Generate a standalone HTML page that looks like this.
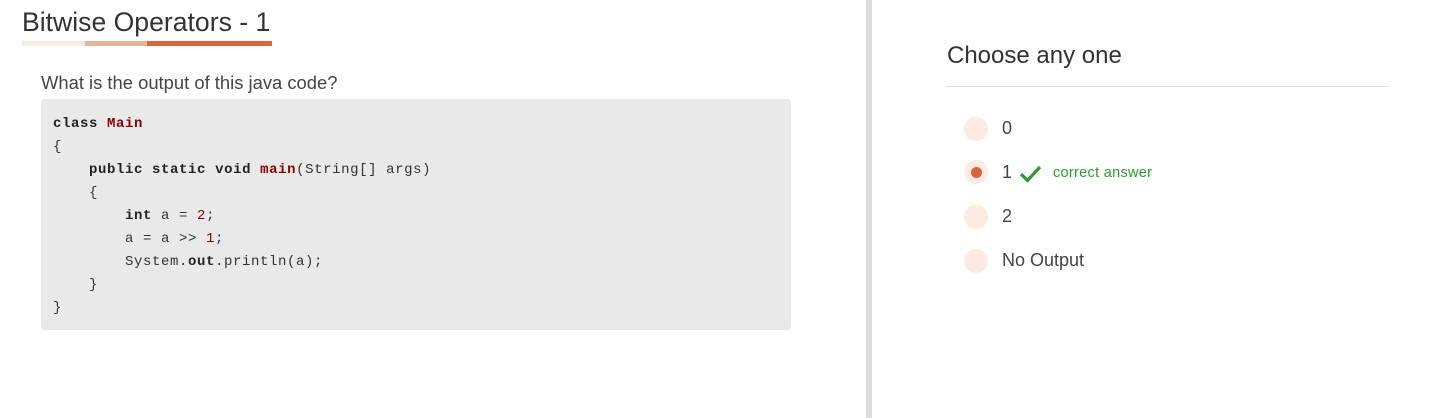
<!DOCTYPE html>
<html><head><meta charset="utf-8"><style>
body{margin:0;width:1432px;height:418px;background:#fff;position:relative;overflow:hidden;font-family:"Liberation Sans",sans-serif;color:#333}
.a{position:absolute;white-space:nowrap}
.code{position:absolute;left:41px;top:99px;width:750px;height:231px;background:#e9e9e9;border-radius:4px}
pre{margin:0;position:absolute;left:12px;top:14px;font-family:"Liberation Mono",monospace;font-size:14px;letter-spacing:0.6px;line-height:23px;color:#333}
b{font-weight:bold;color:#222}
.r{color:#8b0000}
.rb{color:#8b0000;font-weight:bold}
.rad{position:absolute;left:964px;width:24px;height:24px;border-radius:50%;background:#fdebe3}
.opt{position:absolute;left:1002px;font-size:18px;color:#444}
</style></head><body>
<div class="a" style="left:22px;top:7px;font-size:26.6px;color:#333">Bitwise Operators - 1</div>
<div class="a" style="left:22px;top:41px;width:63px;height:5px;background:#fbe9e0"></div>
<div class="a" style="left:85px;top:41px;width:62px;height:5px;background:#e2b59f"></div>
<div class="a" style="left:147px;top:41px;width:125px;height:5px;background:#d9663a"></div>
<div class="a" style="left:41px;top:72px;font-size:18.4px;color:#444">What is the output of this java code?</div>
<div class="code"><pre><b>class</b> <span class="rb">Main</span>
{
    <b>public</b> <b>static</b> <b>void</b> <span class="rb">main</span>(String[] args)
    {
        <b>int</b> a = <span class="r">2</span>;
        a = a &gt;&gt; <span class="r">1</span>;
        System.<b>out</b>.println(a);
    }
}</pre></div>
<div class="a" style="left:866px;top:0;width:6px;height:418px;background:#dcdcdc"></div>
<div class="a" style="left:947px;top:42px;font-size:24px;color:#333">Choose any one</div>
<div class="a" style="left:946px;top:86px;width:443px;height:1px;background:#ddd"></div>
<div class="rad" style="top:117px"></div><div class="opt" style="top:118px">0</div>
<div class="rad" style="top:160px"></div><div class="a" style="left:971px;top:167px;width:11px;height:11px;border-radius:50%;background:#d9663a"></div><div class="opt" style="top:162px">1</div>
<svg class="a" style="left:1019px;top:164px" width="24" height="20" viewBox="0 0 24 20"><path d="M2 10 L8.5 16.5 L21 3" fill="none" stroke="#2e9a2e" stroke-width="3.2"/></svg>
<div class="a" style="left:1053px;top:165px;font-size:14.5px;letter-spacing:0.3px;color:#2e9a2e">correct answer</div>
<div class="rad" style="top:205px"></div><div class="opt" style="top:206px">2</div>
<div class="rad" style="top:249px"></div><div class="opt" style="top:250px">No Output</div>
</body></html>
